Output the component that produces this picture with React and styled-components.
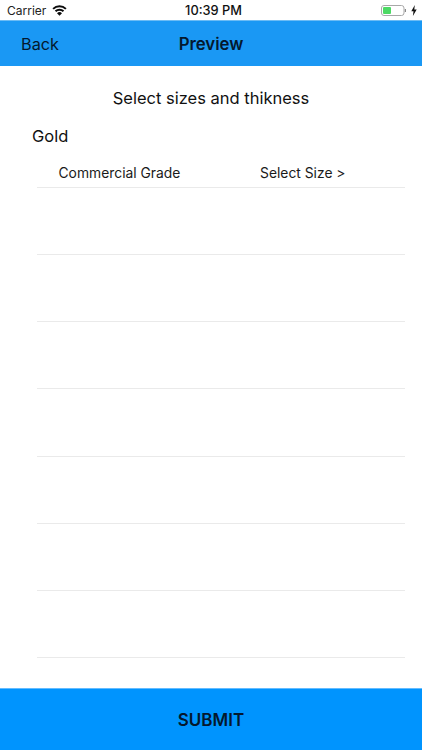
import React from "react";
import styled, { createGlobalStyle } from "styled-components";

const Global = createGlobalStyle`
  html, body { margin: 0; padding: 0; background: #fff; }
  #root { width: 422px; height: 750px; }
  * { box-sizing: border-box; }
`;

const Screen = styled.div`
  width: 422px;
  height: 750px;
  display: flex;
  flex-direction: column;
  overflow: hidden;
  background: #fff;
  font-family: Inter, "Liberation Sans", sans-serif;
  color: #000;
`;

const StatusBar = styled.div`
  height: 20px;
  flex: none;
  display: grid;
  grid-template-columns: 1fr auto 1fr;
  align-items: center;
  padding: 1px 5px 0 7px;
  font-size: 13px;
  color: #111;
`;

const StatusLeft = styled.div`
  display: flex;
  align-items: center;
  gap: 6px;
  font-size: 12px;
  color: #222;
`;

const StatusTime = styled.div`
  font-weight: 500;
  font-size: 12.8px;
  margin-left: 3px;
`;

const StatusRight = styled.div`
  display: flex;
  justify-content: flex-end;
  align-items: center;
  gap: 5px;
`;

const NavBar = styled.header`
  height: 46px;
  flex: none;
  background: #1a98f4;
  border-top: 1px solid #6cbcf5;
  display: grid;
  grid-template-columns: 1fr auto 1fr;
  align-items: center;
  padding: 0 21px;
  color: #04182e;
`;

const BackLabel = styled.div`
  font-size: 16.3px;
`;

const NavTitle = styled.div`
  font-size: 16.8px;
  font-weight: 600;
`;

const Content = styled.main`
  flex: 1;
  min-height: 0;
  display: flex;
  flex-direction: column;
`;

const Heading = styled.div`
  text-align: center;
  font-size: 16.5px;
  line-height: 22px;
  margin-top: 21px;
  color: #111;
`;

const Metal = styled.div`
  font-size: 16.5px;
  line-height: 22px;
  margin: 16px 0 0 32px;
  color: #111;
`;

const List = styled.div`
  margin: 14px 17px 0 37px;
  display: flex;
  flex-direction: column;
`;

const Row = styled.div`
  height: 67.15px;
  flex: none;
  border-bottom: 1px solid #eaeaea;
  display: flex;
  align-items: flex-end;
  padding-bottom: 5px;
  font-size: 13.85px;
  color: #1a1a1a;
  &:first-child {
    height: 27px;
  }
`;

const Grade = styled.div`
  width: 223px;
  padding-left: 21.5px;
  line-height: 18px;
`;

const SizeSelect = styled.div`
  line-height: 18px;
`;

const SubmitBar = styled.button`
  height: 62px;
  flex: none;
  border: 0;
  border-top: 1px solid #62bbff;
  background: #0094fe;
  color: #04182e;
  font: 600 17px Inter, "Liberation Sans", sans-serif;
  padding: 0;
`;

const Wifi = () => (
  <svg width="15" height="11" viewBox="0 0 15 11" aria-hidden="true">
    <path d="M1.1 3.9a9.2 9.2 0 0 1 12.8 0" fill="none" stroke="#0c0c0c" strokeWidth="2" />
    <path d="M3.5 6.3a5.8 5.8 0 0 1 8 0" fill="none" stroke="#0c0c0c" strokeWidth="2" />
    <path d="M7.5 10.8 10 8.3a3.6 3.6 0 0 0-5 0z" fill="#0c0c0c" />
  </svg>
);

const Battery = () => (
  <svg width="25" height="11" viewBox="0 0 25 11" aria-hidden="true">
    <rect x="0.5" y="0.5" width="22.5" height="10" rx="2.5" fill="none" stroke="#a8a8a8" />
    <rect x="2" y="2" width="8" height="7" rx="1" fill="#4cd964" />
    <rect x="23.8" y="4" width="1.2" height="3" fill="#8a8a8a" />
  </svg>
);

const Bolt = () => (
  <svg width="6" height="11" viewBox="0 0 6 11" aria-hidden="true">
    <path d="M3.8 0 .3 6.2h2.2L1.9 11l3.8-6.6H3.3z" fill="#111" />
  </svg>
);

const emptyRows = Array.from({ length: 7 }, (_, i) => i);

export default function App() {
  return (
    <Screen>
      <Global />
      <StatusBar>
        <StatusLeft>
          Carrier
          <Wifi />
        </StatusLeft>
        <StatusTime>10:39 PM</StatusTime>
        <StatusRight>
          <Battery />
          <Bolt />
        </StatusRight>
      </StatusBar>
      <NavBar>
        <BackLabel>Back</BackLabel>
        <NavTitle>Preview</NavTitle>
      </NavBar>
      <Content>
        <Heading>Select sizes and thikness</Heading>
        <Metal>Gold</Metal>
        <List>
          <Row>
            <Grade>Commercial Grade</Grade>
            <SizeSelect>Select Size &gt;</SizeSelect>
          </Row>
          {emptyRows.map((i) => (
            <Row key={i} />
          ))}
        </List>
      </Content>
      <SubmitBar>SUBMIT</SubmitBar>
    </Screen>
  );
}
